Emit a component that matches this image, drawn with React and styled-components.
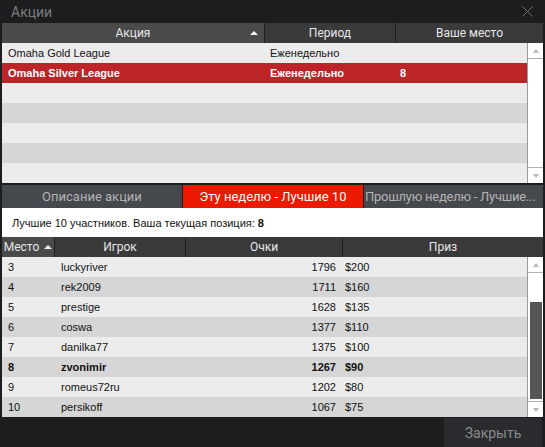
import React from 'react';
import styled, { createGlobalStyle } from 'styled-components';

const promos = [
  { name: 'Omaha Gold League', period: 'Еженедельно', place: '' },
  { name: 'Omaha Silver League', period: 'Еженедельно', place: '8', selected: true },
  {}, {}, {}, {}, {},
];

const leaders = [
  { place: 3, player: 'luckyriver', points: 1796, prize: '$200' },
  { place: 4, player: 'rek2009', points: 1711, prize: '$160' },
  { place: 5, player: 'prestige', points: 1628, prize: '$135' },
  { place: 6, player: 'coswa', points: 1377, prize: '$110' },
  { place: 7, player: 'danilka77', points: 1375, prize: '$100' },
  { place: 8, player: 'zvonimir', points: 1267, prize: '$90', me: true },
  { place: 9, player: 'romeus72ru', points: 1202, prize: '$80' },
  { place: 10, player: 'persikoff', points: 1067, prize: '$75' },
];

const GlobalStyle = createGlobalStyle`
  body {
    margin: 0;
    background: #1d1d1f;
    font-family: "Liberation Sans", Arial, sans-serif;
  }
`;

const Window = styled.div`
  width: 545px;
  height: 447px;
  display: flex;
  flex-direction: column;
  background: #1d1d1f;
  overflow: hidden;
`;

const TitleBar = styled.div`
  height: 23px;
  display: flex;
  align-items: center;
  justify-content: space-between;
  padding: 0 12px 0 11px;
  color: #7b7b7b;
  font-family: Roboto, "Liberation Sans", sans-serif;
  font-size: 14px;
`;

const Panel = styled.div`
  margin: 0 2px;
  display: flex;
  flex-direction: column;
`;

const HeaderRow = styled.div`
  display: grid;
  grid-template-columns: ${p => p.$cols};
  gap: 1px;
  height: 20px;
  background: #202020;
`;

const HeadCell = styled.div`
  display: flex;
  align-items: center;
  justify-content: center;
  position: relative;
  background: ${p => (p.$sorted ? '#4a4a4a' : '#3a3a3a')};
  color: #e6e6e6;
  font-family: Roboto, "Liberation Sans", sans-serif;
  font-size: 12px;
  gap: 5px;
`;

const SortArrow = styled.span`
  width: 0;
  height: 0;
  border-left: 4px solid transparent;
  border-right: 4px solid transparent;
  border-bottom: 4px solid #f0f0f0;
  ${p => p.$edge && 'position: absolute; right: 6px; top: 8px;'}
`;

const Body = styled.div`
  display: flex;
  height: ${p => p.$h}px;
`;

const Rows = styled.div`
  flex: 1;
  display: flex;
  flex-direction: column;
`;

const Row = styled.div`
  display: grid;
  grid-template-columns: ${p => p.$cols};
  height: 20px;
  align-items: center;
  font-size: 11px;
  font-weight: ${p => (p.$bold ? 700 : 400)};
  color: ${p => (p.$selected ? '#ffffff' : '#111')};
  background: ${p => (p.$selected ? '#bd2427' : p.$odd ? '#d6d6d6' : '#ececec')};
`;

const Cell = styled.div`
  padding: ${p => p.$pad || '0 0 0 6px'};
  text-align: ${p => p.$align || 'left'};
  white-space: nowrap;
`;

const Scrollbar = styled.div`
  width: 15px;
  border-left: 1px solid #9a9a9a;
  background: #fff;
  display: flex;
  flex-direction: column;
`;

const ScrollButton = styled.div`
  height: 15px;
  display: flex;
  align-items: center;
  justify-content: center;
  border-${p => (p.$down ? 'top' : 'bottom')}: 1px solid #b0b0b0;
  &::after {
    content: '';
    border-left: 3px solid transparent;
    border-right: 3px solid transparent;
    border-${p => (p.$down ? 'top' : 'bottom')}: 4px solid #b8b8b8;
  }
`;

const Track = styled.div`
  flex: 1;
  padding: ${p => p.$thumb ? '29px 1px 2px 2px' : '0'};
  display: flex;
`;

const Thumb = styled.div`
  flex: 1;
  background: #555555;
`;

const Gap = styled.div`
  height: 2px;
`;

const Tabs = styled.div`
  display: grid;
  grid-template-columns: 180px 180px 1fr;
  gap: 1px;
  height: 23px;
`;

const Tab = styled.div`
  display: flex;
  align-items: center;
  justify-content: ${p => (p.$clipped ? 'flex-start' : 'center')};
  padding: 0 1px;
  background: ${p => (p.$active ? '#ec1b00' : '#45484c')};
  color: ${p => (p.$active ? '#ffffff' : '#b4b4b4')};
  font-family: Roboto, "Liberation Sans", sans-serif;
  font-size: 13px;
  letter-spacing: ${p => (p.$clipped ? '-0.25px' : '0')};
  white-space: nowrap;
  overflow: hidden;
`;

const Info = styled.div`
  height: 29px;
  background: #ffffff;
  display: flex;
  align-items: center;
  padding-left: 10px;
  font-size: 11px;
  color: #111;

  b {
    margin-left: 3px;
  }
`;

const Footer = styled.div`
  flex: 1;
  display: flex;
  justify-content: flex-end;
  align-items: flex-end;
  padding-right: 3px;
`;

const CloseButton = styled.button`
  width: 98px;
  height: 29px;
  border: none;
  background: #2a2b2e;
  color: #8a8a8a;
  font-family: Roboto, "Liberation Sans", sans-serif;
  font-size: 14px;
  cursor: pointer;
`;

const CloseIcon = () => (
  <svg width="11" height="11" viewBox="0 0 11 11">
    <path d="M0.5 0.5 L10.5 10.5 M10.5 0.5 L0.5 10.5" stroke="#6e6e6e" strokeWidth="1" />
  </svg>
);

const topCols = '262px 130px 1fr';
const topRowCols = '262px 131px 1fr';
const boardCols = '52px 130px 156px 1fr';
const boardRowCols = '53px 131px 157px 1fr';

export default function App() {
  return (
    <>
      <GlobalStyle />
      <Window>
        <TitleBar>
          Акции
          <CloseIcon />
        </TitleBar>

        <Panel>
          <HeaderRow $cols={topCols}>
            <HeadCell $sorted>Акция<SortArrow $edge /></HeadCell>
            <HeadCell>Период</HeadCell>
            <HeadCell>Ваше место</HeadCell>
          </HeaderRow>
          <Body $h={140}>
            <Rows>
              {promos.map((p, i) => (
                <Row key={i} $cols={topRowCols} $odd={i % 2 === 1} $selected={p.selected} $bold={p.selected}>
                  <Cell>{p.name}</Cell>
                  <Cell>{p.period}</Cell>
                  <Cell $pad="0 0 0 5px">{p.place}</Cell>
                </Row>
              ))}
            </Rows>
            <Scrollbar>
              <ScrollButton />
              <Track />
              <ScrollButton $down />
            </Scrollbar>
          </Body>
          <Gap />
          <Tabs>
            <Tab>Описание акции</Tab>
            <Tab $active>Эту неделю - Лучшие 10</Tab>
            <Tab $clipped>Прошлую неделю - Лучшие...</Tab>
          </Tabs>
          <Info>
            Лучшие 10 участников. Ваша текущая позиция: <b>8</b>
          </Info>
          <HeaderRow $cols={boardCols}>
            <HeadCell $sorted>Место<SortArrow /></HeadCell>
            <HeadCell>Игрок</HeadCell>
            <HeadCell>Очки</HeadCell>
            <HeadCell>Приз</HeadCell>
          </HeaderRow>
          <Body $h={160}>
            <Rows>
              {leaders.map((r, i) => (
                <Row key={r.place} $cols={boardRowCols} $odd={i % 2 === 1} $bold={r.me}>
                  <Cell>{r.place}</Cell>
                  <Cell>{r.player}</Cell>
                  <Cell $align="right" $pad="0 7px 0 0">{r.points}</Cell>
                  <Cell $pad="0 0 0 2px">{r.prize}</Cell>
                </Row>
              ))}
            </Rows>
            <Scrollbar>
              <ScrollButton />
              <Track $thumb><Thumb /></Track>
              <ScrollButton $down />
            </Scrollbar>
          </Body>
        </Panel>

        <Footer>
          <CloseButton>Закрыть</CloseButton>
        </Footer>
      </Window>
    </>
  );
}
